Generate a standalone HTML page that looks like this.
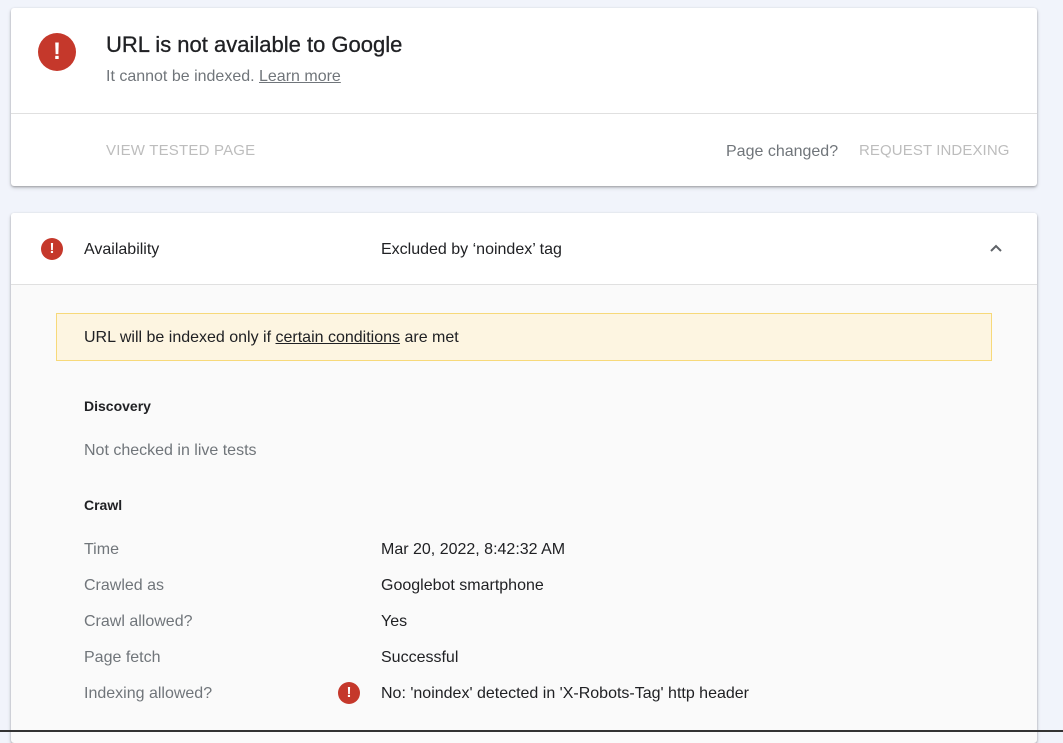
<!DOCTYPE html>
<html><head><style>
*{margin:0;padding:0;box-sizing:border-box}
body{width:1063px;height:732px;overflow:hidden;background:#f1f4fb;font-family:"Liberation Sans",Arial,sans-serif;position:relative}
.card{position:absolute;left:11px;width:1026px;background:#fff;border-radius:3px;box-shadow:0 1px 2px rgba(0,0,0,.3),0 2px 5px rgba(0,0,0,.12)}
.a{position:absolute;white-space:nowrap}
.ic{position:absolute;border-radius:50%;background:#c5382b;color:#fff;font-weight:bold;text-align:center}
.lbl{color:#70757a;font-size:16px}
.val{color:#202124;font-size:16px}
</style></head><body>
<div class="card" style="top:8px;height:178px">
 <div class="ic" style="left:27px;top:25px;width:38px;height:38px;font-size:24px;line-height:38px">!</div>
 <div class="a" style="left:95px;top:24px;font-size:22px;color:#202124;-webkit-text-stroke:.3px #202124">URL is not available to Google</div>
 <div class="a" style="left:95px;top:60px;font-size:16px;color:#70757a">It cannot be indexed. <u>Learn more</u></div>
 <div style="position:absolute;left:0;right:0;top:105px;border-top:1px solid #e0e0e0"></div>
 <div class="a" style="left:95px;top:134px;font-size:15px;color:#bdbdbd;letter-spacing:.2px">VIEW TESTED PAGE</div>
 <div class="a" style="left:715px;top:135px;font-size:16px;color:#70757a">Page changed?</div>
 <div class="a" style="left:848px;top:134px;font-size:15px;color:#bdbdbd;letter-spacing:.1px">REQUEST INDEXING</div>
</div>
<div class="card" style="top:213px;height:530px;background:#fafafa">
 <div style="position:absolute;left:0;right:0;top:0;height:72px;background:#fff;border-bottom:1px solid #e0e0e0;border-radius:3px 3px 0 0"></div>
 <div class="ic" style="left:30px;top:25px;width:22px;height:22px;font-size:15px;line-height:22px">!</div>
 <div class="a val" style="left:73px;top:28px">Availability</div>
 <div class="a val" style="left:370px;top:28px">Excluded by ‘noindex’ tag</div>
 <svg class="a" style="left:978px;top:30px" width="14" height="10"><path d="M2 8 L7 3 L12 8" stroke="#5f6368" stroke-width="2" fill="none"/></svg>
 <div style="position:absolute;left:45px;top:100px;width:936px;height:48px;background:#fdf5e1;border:1px solid #f7d97a"></div>
 <div class="a val" style="left:73px;top:116px">URL will be indexed only if <u>certain conditions</u> are met</div>
 <div class="a" style="left:73px;top:185px;font-size:14px;font-weight:bold;color:#202124">Discovery</div>
 <div class="a lbl" style="left:73px;top:229px">Not checked in live tests</div>
 <div class="a" style="left:73px;top:284px;font-size:14px;font-weight:bold;color:#202124">Crawl</div>
 <div class="a lbl" style="left:73px;top:328px">Time</div><div class="a val" style="left:370px;top:328px">Mar 20, 2022, 8:42:32 AM</div>
 <div class="a lbl" style="left:73px;top:364px">Crawled as</div><div class="a val" style="left:370px;top:364px">Googlebot smartphone</div>
 <div class="a lbl" style="left:73px;top:400px">Crawl allowed?</div><div class="a val" style="left:370px;top:400px">Yes</div>
 <div class="a lbl" style="left:73px;top:436px">Page fetch</div><div class="a val" style="left:370px;top:436px">Successful</div>
 <div class="a lbl" style="left:73px;top:472px">Indexing allowed?</div>
 <div class="ic" style="left:327px;top:469px;width:22px;height:22px;font-size:15px;line-height:22px">!</div>
 <div class="a val" style="left:370px;top:472px">No: 'noindex' detected in 'X-Robots-Tag' http header</div>
</div>
<div style="position:absolute;left:0;right:0;top:730px;height:2px;background:#333"></div>
</body></html>
